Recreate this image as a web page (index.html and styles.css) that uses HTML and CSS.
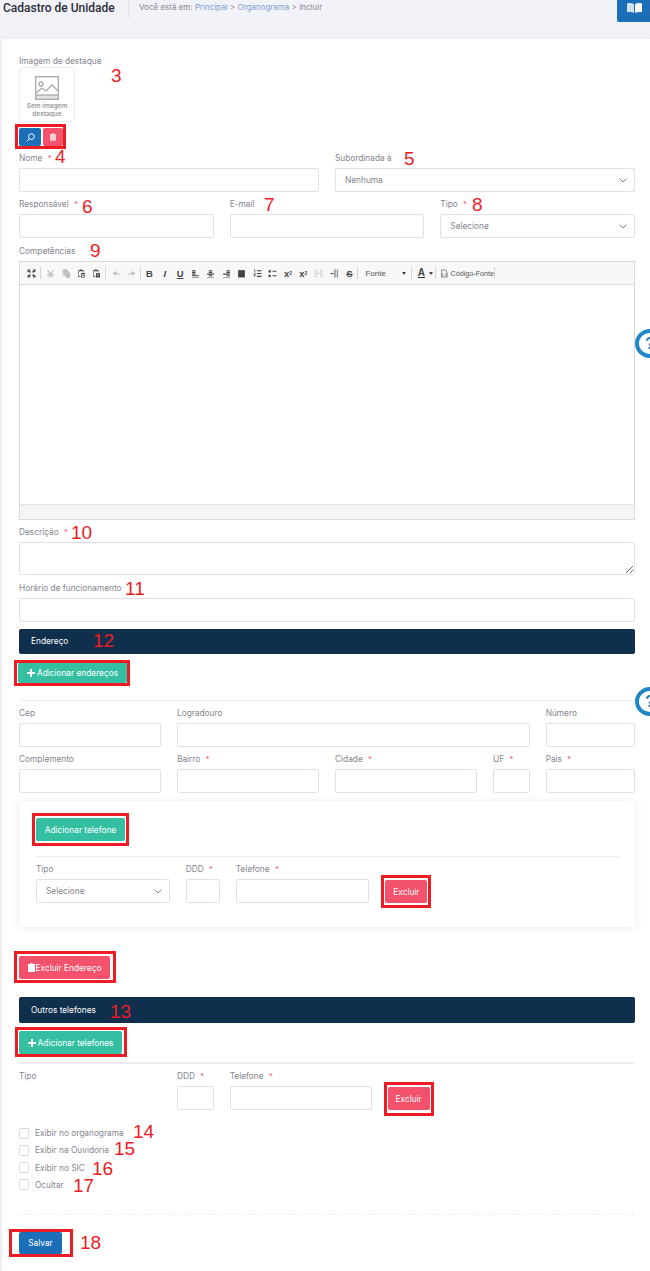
FILE: index.html
```html
<!DOCTYPE html>
<html lang="pt-BR">
<head>
    <meta charset="UTF-8">
    <meta name="viewport" content="width=device-width, initial-scale=1.0">
    <title>Cadastro de Unidade</title>
    <link rel="stylesheet" href="styles.css">
</head>
<body>
<div class="page">
    <header class="topbar">
        <h1 class="page-title">Cadastro de Unidade</h1>
        <div class="crumbs">Você está em: <a>Principal</a> &gt; <a>Organograma</a> &gt; Incluir</div>
        <button class="manual-btn" aria-label="Manual">
            <svg width="15" height="10" viewBox="0 0 15 10"><path d="M0 .6C2.400-.2 4.800 0 7 1.200V10C4.800 8.900 2.400 8.700 0 9.300Z" fill="#cfe0f1"/><path d="M15 .6C12.600-.2 10.200 0 8 1.200V10c2.200-1.100 4.600-1.300 7-.7Z" fill="#fff"/></svg>
        </button>
    </header>

    <main class="card">
        <label class="lbl">Imagem de destaque</label>
        <div class="thumb">
            <svg width="24" height="24" viewBox="0 0 24 24" fill="none" stroke="#aaa" stroke-width="1.300"><rect x=".7" y=".7" width="22.600" height="22.600"/><rect x=".7" y="19" width="22.600" height="4.300" fill="#e2e2e2"/><circle cx="6" cy="8" r="2"/><path d="M1 17l6-5 4 3 6-6 6 6"/></svg>
            <span>Sem imagem destaque</span>
        </div>
        <div class="thumb-tools boxed box-tools">
            <button class="btn-icon blue" aria-label="Buscar">
                <svg width="9" height="9" viewBox="0 0 10 10" fill="none" stroke="#fff" stroke-width="1.100"><circle cx="6" cy="4" r="3.200"/><path d="M3.700 6.300L.8 9.200"/></svg>
            </button>
            <button class="btn-icon pink" aria-label="Remover">
                <svg width="6" height="8" viewBox="0 0 7 9" fill="#fff" opacity=".7"><path d="M2.300 0h2.400v1H7v8H0V1h2.300z"/></svg>
            </button>
        </div>

        <div class="grid row-top">
            <div class="c6"><label class="lbl">Nome <i>*</i></label><input class="field"></div>
            <div class="c6">
                <label class="lbl">Subordinada à</label>
                <div class="field select">Nenhuma<svg width="8" height="5" viewBox="0 0 8 5" fill="none" stroke="#888"><path d="M.5.500L4 4l3.500-3.500"/></svg></div>
            </div>
        </div>
        <div class="grid">
            <div class="c4"><label class="lbl">Responsável <i>*</i></label><input class="field"></div>
            <div class="c4"><label class="lbl">E-mail</label><input class="field"></div>
            <div class="c4">
                <label class="lbl">Tipo <i>*</i></label>
                <div class="field select">Selecione<svg width="8" height="5" viewBox="0 0 8 5" fill="none" stroke="#888"><path d="M.5.500L4 4l3.500-3.500"/></svg></div>
            </div>
        </div>

        <label class="lbl lbl-editor">Competências</label>
        <div class="editor">
            <div class="toolbar">
                <span class="tool"><svg viewBox="0 0 16 16"><path d="M1 1h5L4.500 2.500 7 5 5 7 2.500 4.500 1 6zM15 1v5l-1.500-1.500L11 7 9 5l2.500-2.500L10 1zM1 15v-5l1.500 1.500L5 9l2 2-2.500 2.500L6 15zM15 15h-5l1.500-1.500L9 11l2-2 2.500 2.500L15 10z"/></svg></span>
                <span class="sep"></span>
                <span class="tool off"><svg viewBox="0 0 16 16"><path d="M3 1l5 6 5-6 1 1-4.500 7a3 3 0 1 1-1.500 1.500L8 9.500l-.5.500A3 3 0 1 1 6 9L2 2zM4.500 11a1.500 1.500 0 1 0 0 3 1.500 1.500 0 0 0 0-3zm7 0a1.500 1.500 0 1 0 0 3 1.500 1.500 0 0 0 0-3z"/></svg></span>
                <span class="tool off"><svg viewBox="0 0 16 16" fill="none" stroke="#444" stroke-width="1.300"><path d="M2 1h6l3 3v7H2zM7 5h5l2 2v8H7z"/></svg></span>
                <span class="tool"><svg viewBox="0 0 16 16"><path d="M2 2h3V1h4v1h3v4h-1V4H3v9h3v1H2z"/><path d="M7 7h7v8H7zm1 2v1h5V9zm0 2v1h5v-1zm0 2v1h5v-1z"/></svg></span>
                <span class="tool"><svg viewBox="0 0 16 16"><path d="M2 2h3V1h4v1h3v4h-1V4H3v9h3v1H2z"/><path d="M7 7h7v8H7zm1.500 1.500v1h1.500v4h1v-4h1.500v-1z"/></svg></span>
                <span class="sep sep-wide"></span>
                <span class="tool off"><svg viewBox="0 0 16 16"><path d="M7 3v3c4 0 7 2 8 7-2-3-4-4-8-4v3L1 7.500z"/></svg></span>
                <span class="tool off"><svg viewBox="0 0 16 16"><path d="M9 3v3c-4 0-7 2-8 7 2-3 4-4 8-4v3l6-4.500z"/></svg></span>
                <span class="sep sep-left"></span>
                <span class="tool txt">B</span>
                <span class="tool txt ital">I</span>
                <span class="tool txt under">U</span>
                <span class="tool"><svg viewBox="0 0 16 16"><path d="M2 2h6v2H2zM2 5h6v2H2zM2 8h6v2H2zM2 11h12v2H2zM2 14h12v1H2z"/></svg></span>
                <span class="tool"><svg viewBox="0 0 16 16"><path d="M5 2h6v2H5zM5 5h6v2H5zM2 8h12v2H2zM5 11h6v2H5zM2 14h12v1H2z"/></svg></span>
                <span class="tool"><svg viewBox="0 0 16 16"><path d="M8 2h6v2H8zM8 5h6v2H8zM2 8h12v2H2zM8 11h6v2H8zM2 14h12v1H2z"/></svg></span>
                <span class="tool"><svg viewBox="0 0 16 16"><path d="M2 2h12v13H2z"/></svg></span>
                <span class="tool"><svg viewBox="0 0 16 16"><path d="M7 2h8v2H7zM7 7h8v2H7zM7 12h8v2H7zM2 1h2v5H3V3H2zM1 8h4v1L3 12h2v1H1v-1l2-3H1z"/></svg></span>
                <span class="tool"><svg viewBox="0 0 16 16"><path d="M1 2h4v4H1zM1 10h4v4H1zM8 3h7v2H8zM8 11h7v2H8z"/></svg></span>
                <span class="tool txt">x<sub>2</sub></span>
                <span class="tool txt">x<sup>2</sup></span>
                <span class="tool off"><svg viewBox="0 0 16 16"><path d="M1 1h1v14H1zM4 1h1v14H4zM11 1h1v14h-1zM14 1h1v14h-1zM6 7h4v2H6z"/></svg></span>
                <span class="tool"><svg viewBox="0 0 16 16"><path d="M7 1h1v14H7zM10 1h1v14h-1zM13 1h1v14h-1zM1 7h5v2H1z"/></svg></span>
                <span class="tool txt strike">S</span>
                <span class="sep"></span>
                <span class="combo">Fonte<span class="caret"></span></span>
                <span class="sep"></span>
                <span class="color"><span class="color-a">A</span><span class="caret"></span></span>
                <span class="sep"></span>
                <span class="source">
                    <svg width="8" height="11" viewBox="0 0 9 11" fill="none" stroke="#555"><path d="M.5.500h5l3 3v7H.5zM3 5L1.500 7 3 9M6 5l1.500 2L6 9"/></svg>
                    Código-Fonte
                </span>
                <span class="sep"></span>
            </div>
            <div class="editor-body"></div>
            <div class="editor-foot"></div>
        </div>

        <label class="lbl lbl-desc">Descrição <i>*</i></label>
        <textarea class="field area"></textarea>
        <label class="lbl lbl-hours">Horário de funcionamento</label>
        <input class="field">

        <div class="bar bar-address">Endereço</div>
        <button class="btn green btn-add-address boxed box-add-address"><svg class="plus" width="8" height="8" viewBox="0 0 8 8" fill="#fff"><path d="M3 0h2v3h3v2H5v3H3V5H0V3h3z"/></svg>Adicionar endereços</button>
        <hr class="rule rule-address">

        <div class="grid">
            <div class="c3"><label class="lbl">Cep</label><input class="field"></div>
            <div class="c7"><label class="lbl">Logradouro</label><input class="field"></div>
            <div class="c2"><label class="lbl">Número</label><input class="field"></div>
        </div>
        <div class="grid">
            <div class="c3"><label class="lbl">Complemento</label><input class="field"></div>
            <div class="c3"><label class="lbl">Bairro <i>*</i></label><input class="field"></div>
            <div class="c3"><label class="lbl">Cidade <i>*</i></label><input class="field"></div>
            <div class="c1"><label class="lbl">UF <i>*</i></label><input class="field"></div>
            <div class="c2"><label class="lbl">País <i>*</i></label><input class="field"></div>
        </div>

        <section class="phones">
            <button class="btn green btn-add-phone boxed box-add-phone">Adicionar telefone</button>
            <hr class="rule rule-phones">
            <div class="grid">
                <div class="c3">
                    <label class="lbl">Tipo</label>
                    <div class="field select">Selecione<svg width="8" height="5" viewBox="0 0 8 5" fill="none" stroke="#888"><path d="M.5.500L4 4l3.500-3.500"/></svg></div>
                </div>
                <div class="c1"><label class="lbl">DDD <i>*</i></label><input class="field"></div>
                <div class="c3"><label class="lbl">Telefone <i>*</i></label><input class="field"></div>
                <div class="c2 btn-cell"><button class="btn pink btn-del boxed box-del">Excluir</button></div>
            </div>
        </section>

        <button class="btn pink btn-del-address boxed box-del-address">
            <svg width="7" height="9" viewBox="0 0 7 9" fill="#fff"><path d="M2.300 0h2.400v1H7v8H0V1h2.300z"/></svg>
            Excluir Endereço
        </button>

        <div class="bar bar-phones">Outros telefones</div>
        <button class="btn green btn-add-phones boxed box-add-phones"><svg class="plus" width="8" height="8" viewBox="0 0 8 8" fill="#fff"><path d="M3 0h2v3h3v2H5v3H3V5H0V3h3z"/></svg>Adicionar telefones</button>
        <hr class="rule rule-other">

        <div class="grid">
            <div class="c3"><label class="lbl">Tipo</label></div>
            <div class="c1"><label class="lbl">DDD <i>*</i></label><input class="field"></div>
            <div class="c3"><label class="lbl">Telefone <i>*</i></label><input class="field"></div>
            <div class="c2 btn-cell"><button class="btn pink btn-del boxed box-del2">Excluir</button></div>
        </div>

        <div class="checks">
            <label class="check"><input type="checkbox">Exibir no organograma</label>
            <label class="check"><input type="checkbox">Exibir na Ouvidoria</label>
            <label class="check"><input type="checkbox">Exibir no SIC</label>
            <label class="check"><input type="checkbox">Ocultar</label>
        </div>

        <hr class="rule-dashed">
        <button class="btn blue btn-save boxed box-save">Salvar</button>
    </main>

    <!-- numeros anotados por cima da tela -->
    <span class="num n3">3</span>
    <span class="num n4">4</span>
    <span class="num n5">5</span>
    <span class="num n6">6</span>
    <span class="num n7">7</span>
    <span class="num n8">8</span>
    <span class="num n9">9</span>
    <span class="num n10">10</span>
    <span class="num n11">11</span>
    <span class="num n12">12</span>
    <span class="num n13">13</span>
    <span class="num n14">14</span>
    <span class="num n15">15</span>
    <span class="num n16">16</span>
    <span class="num n17">17</span>
    <span class="num n18">18</span>

    <div class="help help-a">?</div>
    <div class="help help-b">?</div>
</div>
</body>
</html>
```

FILE: styles.css
```css
* {
    margin: 0;
    padding: 0;
    box-sizing: border-box;
}

:root {
    --ink: #85858f;
    --line: #dfe1ea;
    --navy: #0f2f4c;
    --blue: #1a6fb8;
    --green: #34bfa3;
    --pink: #f4516c;
    --mark: #ed1c24;
}

body {
    background: #f2f3f8;
    font-family: "Inter", "Noto Sans", sans-serif;
    font-size: 8.3px;
    color: var(--ink);
}

.page {
    position: relative;
    width: 650px;
    height: 1271px;
    overflow: hidden;
}

/* topo */
.topbar {
    display: flex;
    align-items: flex-start;
    height: 39px;
}

.page-title {
    font-family: "Roboto", sans-serif;
    font-size: 12px;
    font-weight: 500;
    line-height: 16px;
    color: #2d2e3a;
    width: 125px;
    margin-left: 3px;
    white-space: nowrap;
}

.crumbs {
    border-left: 1px solid #e4e5ec;
    height: 18px;
    padding-left: 10px;
    line-height: 14px;
    font-size: 8px;
    flex: 1;
}

.crumbs a {
    color: #7d9fd0;
}

.manual-btn {
    width: 33px;
    height: 22px;
    border: none;
    background: var(--blue);
    border-radius: 0 0 0 2px;
    padding-left: 2px;
    display: flex;
    align-items: center;
    justify-content: center;
    padding-bottom: 6px;
}

/* card principal */
.card {
    background: #fff;
    margin-left: 2px;
    height: 1232px;
    padding: 16px 15px 0 17px;
    box-shadow: 0 0 8px rgba(80, 80, 120, 0.06);
}

.lbl {
    display: block;
    height: 12px;
    line-height: 12px;
    margin-bottom: 4px;
    white-space: nowrap;
}

.lbl i {
    font-style: normal;
    font-size: 7.5px;
    color: var(--pink);
    margin-left: 3px;
}

.thumb {
    width: 56px;
    height: 55px;
    margin-top: -4px;
    border: 1px solid #eceef3;
    border-radius: 3px;
    display: flex;
    flex-direction: column;
    align-items: center;
    padding-top: 8px;
}

.thumb span {
    margin-top: 2px;
    width: 44px;
    text-align: center;
    font-size: 6.5px;
    font-weight: 600;
    line-height: 8px;
    color: #9a9a9a;
}

.thumb-tools {
    display: flex;
    gap: 2px;
    width: 44px;
    margin-top: 6px;
}

.btn-icon {
    height: 18px;
    border: none;
    border-radius: 2px;
    display: flex;
    align-items: center;
    justify-content: center;
}

.btn-icon.blue { width: 22px; background: var(--blue); }
.btn-icon.pink { width: 20px; background: var(--pink); }

/* grade de 12 colunas */
.grid {
    display: grid;
    grid-template-columns: repeat(12, 1fr);
    column-gap: 16px;
    margin-bottom: 6px;
}

.row-top { margin-top: 6px; }

.c1 { grid-column: span 1; }
.c2 { grid-column: span 2; }
.c3 { grid-column: span 3; }
.c4 { grid-column: span 4; }
.c6 { grid-column: span 6; }
.c7 { grid-column: span 7; }

.field {
    display: block;
    width: 100%;
    height: 24px;
    border: 1px solid var(--line);
    border-radius: 2px;
    background: #fff;
    font: inherit;
    color: inherit;
}

.select {
    display: flex;
    align-items: center;
    justify-content: space-between;
    padding: 0 7px 0 9px;
}

.area {
    height: 33px;
    resize: vertical;
}

/* editor */
.lbl-editor { margin-top: 7px; }

.editor {
    height: 259px;
    border: 1px solid #d9d9d9;
    display: flex;
    flex-direction: column;
}

.toolbar {
    height: 23px;
    flex: none;
    background: #f8f8f8;
    border-bottom: 1px solid #d9d9d9;
    display: flex;
    align-items: center;
    padding-left: 4.300px;
    color: #444;
    font-family: "Liberation Sans", sans-serif;
}

.tool {
    width: 15.400px;
    height: 12px;
    flex: none;
    display: flex;
    align-items: center;
    justify-content: center;
    font-size: 9.500px;
    font-weight: 700;
    white-space: nowrap;
}

.tool svg {
    width: 9px;
    height: 9px;
    fill: #444;
}

.tool.off { opacity: 0.3; }
.ital { font-style: italic; }
.under { text-decoration: underline; }
.strike { text-decoration: line-through; }

.tool sub,
.tool sup {
    font-size: 5px;
    line-height: 0;
}

.sep {
    width: 1px;
    height: 12px;
    flex: none;
    background: #d4d4d4;
    margin: 0 2px 0 0.300px;
}

.sep-wide { margin: 0 2.500px 0 0.800px; }
.sep-left { margin: 0 0.800px 0 0.300px; }

.combo {
    width: 50px;
    flex: none;
    display: flex;
    align-items: center;
    justify-content: space-between;
    padding: 0 4px 0 5px;
    font-size: 8px;
    color: #555;
}

.caret {
    width: 0;
    height: 0;
    border: 2px solid transparent;
    border-top: 3px solid #444;
    border-bottom: 0;
}

.color {
    width: 21px;
    flex: none;
    display: flex;
    align-items: center;
    gap: 4px;
    padding-left: 4px;
}

.color-a {
    font-size: 10px;
    font-weight: 700;
    border-bottom: 1.500px solid #333;
    line-height: 9px;
}

.source {
    width: 56px;
    flex: none;
    display: flex;
    align-items: center;
    gap: 3px;
    padding-left: 3px;
    font-size: 7.200px;
    color: #555;
    white-space: nowrap;
}

.editor-body { flex: 1; }

.editor-foot {
    height: 15px;
    background: #f5f5f5;
    border-top: 1px solid #e4e4e4;
}

.lbl-desc { margin-top: 6px; }
.lbl-hours { margin-top: 7px; }

/* faixas e botoes */
.bar {
    height: 25px;
    background: var(--navy);
    border-radius: 2px;
    color: #fff;
    line-height: 25px;
    padding-left: 12px;
}

.bar-address { margin-top: 7px; }
.bar-phones { margin-top: 18px; height: 26px; line-height: 26px; }

.btn {
    display: flex;
    align-items: center;
    justify-content: center;
    height: 23px;
    border: none;
    border-radius: 2px;
    color: #fff;
    font: inherit;
    white-space: nowrap;
}

.btn.green { background: var(--green); }
.btn.pink { background: var(--pink); }
.btn.blue { background: var(--blue); }

.plus {
    flex: none;
    margin-right: 2px;
}

.btn-add-address { width: 109px; height: 21px; margin: 8px 0 0 -1px; }
.btn-add-phone { width: 89px; }
.btn-add-phones { width: 103px; margin-top: 8px; }
.btn-del { width: 42px; }
.btn-del-address { width: 91px; gap: 1px; margin-top: 29px; }
.btn-save { width: 43px; height: 22px; margin-top: 17px; }

.btn-cell { padding-top: 17px; }

.rule {
    border: none;
    border-top: 1px solid #ebedf2;
}

.rule-address { margin: 17px 0 6px; }
.rule-phones { margin: 15px 0 6px; }
.rule-other { border-top-width: 2px; margin: 8px 0 6px; }

.rule-dashed {
    border: none;
    border-top: 1px dashed #ebedf2;
    margin-top: 23px;
}

.phones {
    height: 126px;
    margin-top: 8px;
    padding: 17px 16px 0 17px;
    background: #fff;
    box-shadow: 0 1px 8px rgba(80, 80, 120, 0.12);
}

.checks {
    margin-top: 17px;
    display: flex;
    flex-direction: column;
    gap: 5.300px;
}

.check {
    display: flex;
    align-items: center;
    gap: 6px;
    height: 12px;
}

.check input {
    appearance: none;
    width: 10px;
    height: 11px;
    border: 1px solid #d8dae4;
    border-radius: 2px;
    background: #fff;
}

/* anotacoes em vermelho */
.boxed {
    position: relative;
}

.boxed::after {
    content: "";
    position: absolute;
    border: 3px solid var(--mark);
    pointer-events: none;
}

.box-tools::after { inset: -4px -3px -3px -4px; }
.box-add-address::after { inset: -2px -3px -3px -4px; }
.box-add-phone::after { inset: -5px -4px -5px -4px; }
.box-del::after { inset: -5px -4px -5px -4px; }
.box-del-address::after { inset: -5px -6px -4px -5px; }
.box-add-phones::after { inset: -4px -5px -3px -4px; }
.box-del2::after { inset: -5px -4px -6px -4px; }
.box-save::after { inset: -3px -11px -3px -10px; }

.num {
    position: absolute;
    font-family: "Liberation Sans", sans-serif;
    font-size: 19px;
    line-height: 20px;
    color: var(--mark);
}

.n3 { left: 111px; top: 66px; }
.n4 { left: 55px; top: 147px; }
.n5 { left: 404px; top: 149px; }
.n6 { left: 82px; top: 197px; }
.n7 { left: 264px; top: 195px; }
.n8 { left: 472px; top: 195px; }
.n9 { left: 90px; top: 241px; }
.n10 { left: 71px; top: 523px; }
.n11 { left: 125px; top: 579px; }
.n12 { left: 93px; top: 631px; }
.n13 { left: 110px; top: 1002px; }
.n14 { left: 133px; top: 1122px; }
.n15 { left: 114px; top: 1139px; }
.n16 { left: 92px; top: 1159px; }
.n17 { left: 73px; top: 1176px; }
.n18 { left: 80px; top: 1233px; }

/* ajuda flutuante */
.help {
    position: absolute;
    left: 635px;
    width: 30px;
    height: 29px;
    border: 4px solid #1f87c8;
    border-radius: 50%;
    background: #fff;
    color: #1f87c8;
    font-family: "Liberation Sans", sans-serif;
    font-size: 16px;
    font-weight: 700;
    line-height: 21px;
    text-align: center;
}

.help-a { top: 329px; }
.help-b { top: 687px; }
```
